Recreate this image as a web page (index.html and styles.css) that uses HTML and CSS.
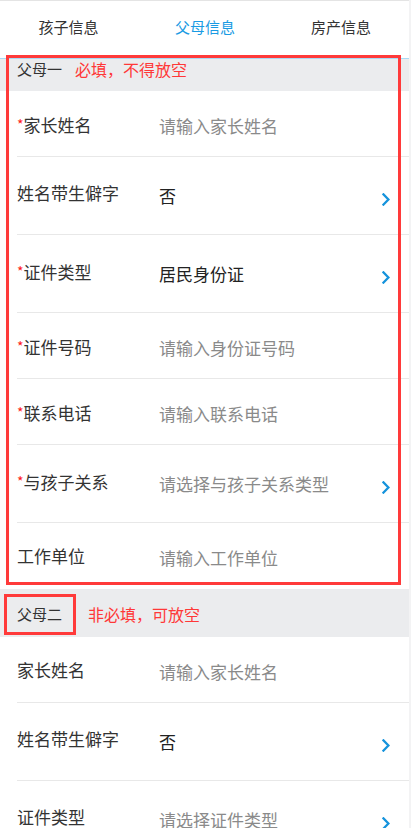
FILE: index.html
```html
<!DOCTYPE html>
<html lang="zh-CN">
<head>
<meta charset="utf-8">
<meta name="viewport" content="width=device-width, initial-scale=1">
<title>父母信息</title>
<link rel="stylesheet" href="styles.css">
</head>
<body>
<div class="page">
  <nav class="tabs">
    <div class="tab">孩子信息</div>
    <div class="tab active">父母信息</div>
    <div class="tab">房产信息</div>
  </nav>

  <div class="section-head first">
    <span class="sec-title">父母一</span>
    <span class="note note-one">必填，不得放空</span>
  </div>
  <div class="row">
    <div class="label"><span class="star">*</span>家长姓名</div>
    <div class="value ph">请输入家长姓名</div>
  </div>
  <div class="row sel">
    <div class="label">姓名带生僻字</div>
    <div class="value">否</div>
    <svg class="arrow" viewBox="0 0 8 13" width="8" height="13"><path d="M1.4 1.4 L6.4 6.5 L1.4 11.6" /></svg>
  </div>
  <div class="row sel">
    <div class="label"><span class="star">*</span>证件类型</div>
    <div class="value">居民身份证</div>
    <svg class="arrow" viewBox="0 0 8 13" width="8" height="13"><path d="M1.4 1.4 L6.4 6.5 L1.4 11.6" /></svg>
  </div>
  <div class="row">
    <div class="label"><span class="star">*</span>证件号码</div>
    <div class="value ph">请输入身份证号码</div>
  </div>
  <div class="row">
    <div class="label"><span class="star">*</span>联系电话</div>
    <div class="value ph">请输入联系电话</div>
  </div>
  <div class="row sel">
    <div class="label"><span class="star">*</span>与孩子关系</div>
    <div class="value ph">请选择与孩子关系类型</div>
    <svg class="arrow" viewBox="0 0 8 13" width="8" height="13"><path d="M1.4 1.4 L6.4 6.5 L1.4 11.6" /></svg>
  </div>
  <div class="row last">
    <div class="label">工作单位</div>
    <div class="value ph">请输入工作单位</div>
  </div>

  <div class="section-head second">
    <span class="sec-title">父母二</span>
    <span class="note note-two">非必填，可放空</span>
  </div>
  <div class="row">
    <div class="label">家长姓名</div>
    <div class="value ph">请输入家长姓名</div>
  </div>
  <div class="row sel">
    <div class="label">姓名带生僻字</div>
    <div class="value">否</div>
    <svg class="arrow" viewBox="0 0 8 13" width="8" height="13"><path d="M1.4 1.4 L6.4 6.5 L1.4 11.6" /></svg>
  </div>
  <div class="row sel">
    <div class="label">证件类型</div>
    <div class="value ph">请选择证件类型</div>
    <svg class="arrow" viewBox="0 0 8 13" width="8" height="13"><path d="M1.4 1.4 L6.4 6.5 L1.4 11.6" /></svg>
  </div>

  <div class="mark mark-one"></div>
  <div class="mark mark-two"></div>
</div>
</body>
</html>
```

FILE: styles.css
```css
* { box-sizing: border-box; }

html, body {
  margin: 0;
  padding: 0;
  background: #f3f3f4;
  font-family: "Noto Sans CJK SC", "Noto Sans", "Liberation Sans", sans-serif;
  color: #333;
}

.page {
  position: relative;
  width: 409px;
  min-height: 828px;
  background: #fff;
  border-top: 1px solid #e4e4e4;
  overflow: hidden;
}

/* tabs */
.tabs {
  display: grid;
  grid-template-columns: 137px 136px 136px;
  border-bottom: 1px solid #a9d9f5;
  background: #fff;
}

.tab {
  height: 57px;
  display: flex;
  align-items: center;
  justify-content: center;
  padding-bottom: 4px;
  font-size: 15px;
  line-height: 20px;
  color: #333;
  border-bottom: 2px solid transparent;
}

.tab.active {
  color: #1a9be3;
  border-bottom-color: #1a9be3;
}

/* section headers */
.section-head {
  display: flex;
  align-items: flex-start;
  background: #ebecee;
  padding-left: 17px;
  line-height: 20px;
}

.section-head.first {
  height: 32px;
  padding-top: 0;
}

.section-head.second {
  height: 48px;
  padding-top: 15px;
}

.sec-title {
  font-size: 15px;
  color: #333;
}

.note {
  font-size: 16px;
  color: #ff3838;
}

.note-one { margin-left: 13px; }
.note-two { margin-left: 26px; }

/* rows */
.row {
  display: flex;
  align-items: flex-start;
  height: 66px;
  margin-left: 17px;
  padding-right: 19px;
  border-bottom: 1px solid #e8e8e8;
  font-size: 17px;
  line-height: 22px;
}

.row.sel { height: 78px; }
.row.last { border-bottom: none; }

.label {
  width: 142px;
  flex: none;
  color: #333;
  padding-top: 22px;
  white-space: nowrap;
}

.row.sel .label { padding-top: 25px; }

.star {
  color: #ff1a1a;
  font-size: 14px;
  vertical-align: 2px;
}

.value {
  flex: 1;
  color: #222;
  padding-top: 24px;
  white-space: nowrap;
}

.row.sel .value { padding-top: 28px; }

.value.ph { color: #8a8a8a; }

.arrow {
  flex: none;
  margin-top: 36px;
  fill: none;
  stroke: #1593dc;
  stroke-width: 2.3;
  stroke-linecap: square;
}

/* red annotation marks laid over the screenshot */
.mark {
  position: absolute;
  border: 3px solid #ff3a3a;
  pointer-events: none;
}

.mark-one {
  left: 6px;
  top: 54px;
  width: 395px;
  height: 530px;
}

.mark-two {
  left: 4px;
  top: 593px;
  width: 72px;
  height: 41px;
}
```
